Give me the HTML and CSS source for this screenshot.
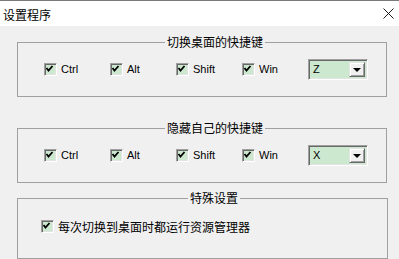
FILE: index.html
```html
<!DOCTYPE html>
<html lang="zh-CN">
<head>
    <meta charset="UTF-8">
    <title>设置程序</title>
    <link rel="stylesheet" href="styles.css">
</head>
<body>
    <div class="window">
        <div class="titlebar">
            <span class="title">设置程序</span>
            <svg class="close" width="11" height="11" viewBox="0 0 11 11">
                <path d="M0.5 0.5 L10.5 10.5 M10.5 0.5 L0.5 10.5" stroke="#1a1a1a" stroke-width="1" fill="none"/>
            </svg>
        </div>

        <div class="content">
            <fieldset class="group group-switch">
                <legend>切换桌面的快捷键</legend>
                <div class="row">
                    <label class="check"><span class="box"></span>Ctrl</label>
                    <label class="check"><span class="box"></span>Alt</label>
                    <label class="check"><span class="box"></span>Shift</label>
                    <label class="check"><span class="box"></span>Win</label>
                    <div class="combo"><span class="value">Z</span><span class="arrow"></span></div>
                </div>
            </fieldset>

            <fieldset class="group group-hide">
                <legend>隐藏自己的快捷键</legend>
                <div class="row">
                    <label class="check"><span class="box"></span>Ctrl</label>
                    <label class="check"><span class="box"></span>Alt</label>
                    <label class="check"><span class="box"></span>Shift</label>
                    <label class="check"><span class="box"></span>Win</label>
                    <div class="combo"><span class="value">X</span><span class="arrow"></span></div>
                </div>
            </fieldset>

            <fieldset class="group group-special">
                <legend>特殊设置</legend>
                <div class="row special-row">
                    <label class="check cjk"><span class="box"></span>每次切换到桌面时都运行资源管理器</label>
                </div>
            </fieldset>
        </div>
    </div>
</body>
</html>
```

FILE: styles.css
```css
body {
    margin: 0;
    font-family: "Liberation Sans", Arial, sans-serif;
    font-size: 11px;
    color: #000;
    background-color: #f0f0f0;
}
.window {
    width: 399px;
    height: 259px;
    overflow: hidden;
    background-color: #f0f0f0;
}
.titlebar {
    height: 25px;
    background-color: #ffffff;
    border-top: 1px solid #7a7a7a;
    display: flex;
    align-items: center;
    justify-content: space-between;
    padding: 0 5px 0 3px;
}
.title {
    font-family: "Noto Sans CJK SC", sans-serif;
    font-size: 12px;
    margin-top: 1px;
}
.close {
    display: block;
}
.content {
    padding: 9px 0 0 17px;
}
.group {
    width: 370px;
    margin: 0;
    padding: 9px 0 16px 26px;
    border: 1px solid #a0a0a0;
    box-sizing: border-box;
    min-width: 0;
}
legend {
    margin: 0 auto;
    padding: 0 2px;
    font-family: "Noto Sans CJK SC", sans-serif;
    font-size: 12px;
    line-height: 14px;
}
.group-hide {
    margin-top: 24px;
}
.group-special {
    margin-top: 8px;
    width: 371px;
    padding: 15px 0 25px 23px;
}
.row {
    display: flex;
    align-items: center;
    height: 22px;
}
.special-row {
    height: 13px;
}
.check {
    width: 66px;
    display: flex;
    align-items: center;
    gap: 4px;
    line-height: 13px;
}
.check.cjk {
    width: auto;
    font-family: "Noto Sans CJK SC", sans-serif;
    font-size: 12px;
}
.box {
    width: 13px;
    height: 13px;
    box-sizing: border-box;
    border-style: solid;
    border-width: 1px;
    border-color: #a0a0a0 #ffffff #ffffff #a0a0a0;
    box-shadow: inset 1px 1px 0 #696969, inset -1px -1px 0 #e3e3e3;
    background-color: #cce8cf;
    background-image: url("data:image/svg+xml,%3Csvg xmlns='http://www.w3.org/2000/svg' width='11' height='11'%3E%3Cpath d='M2.5 5 L4.5 7.5 L8.5 3' stroke='%23000' stroke-width='1.8' fill='none'/%3E%3C/svg%3E");
    background-position: -1px -1px;
    background-repeat: no-repeat;
    flex-shrink: 0;
}
.combo {
    width: 60px;
    height: 21px;
    box-sizing: border-box;
    border-style: solid;
    border-width: 1px;
    border-color: #a0a0a0 #ffffff #ffffff #a0a0a0;
    box-shadow: inset 1px 1px 0 #696969, inset -1px -1px 0 #e3e3e3;
    background-color: #cce8cf;
    display: flex;
    align-items: center;
    justify-content: space-between;
    padding: 2px;
}
.value {
    padding-left: 2px;
}
.arrow {
    width: 16px;
    height: 15px;
    box-sizing: border-box;
    background-color: #f0f0f0;
    border-style: solid;
    border-width: 1px;
    border-color: #e3e3e3 #696969 #696969 #e3e3e3;
    box-shadow: inset 1px 1px 0 #ffffff, inset -1px -1px 0 #a0a0a0;
    display: flex;
    align-items: center;
    justify-content: center;
}
.arrow::after {
    content: "";
    border-left: 4px solid transparent;
    border-right: 4px solid transparent;
    border-top: 4px solid #000;
    margin-top: 1px;
}
```
